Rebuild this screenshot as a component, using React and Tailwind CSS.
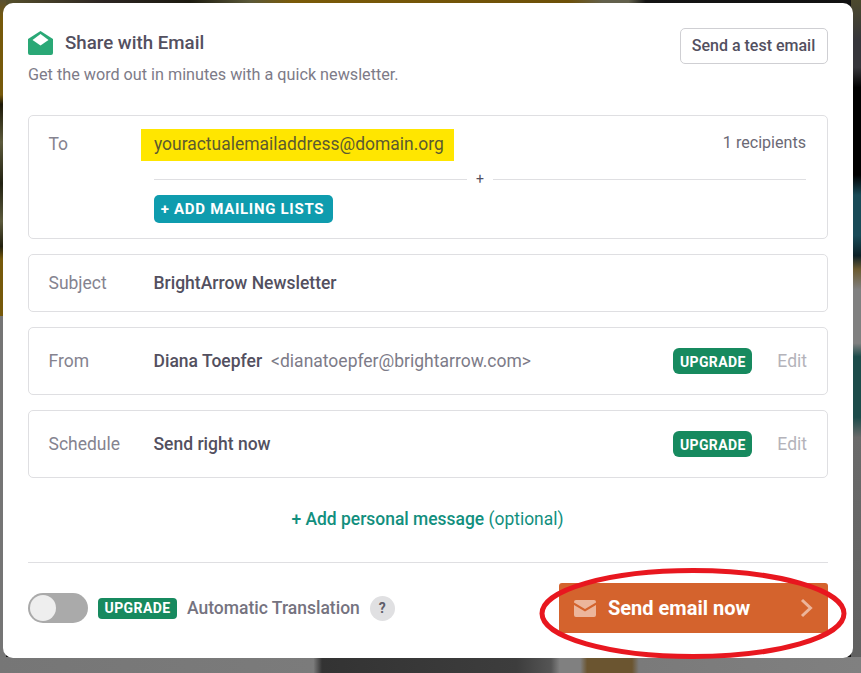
const roboto = { fontFamily: 'Roboto, sans-serif' };

function UpgradeBadge({ tall }) {
    return (
        <span
            className={`flex w-[79px] items-center justify-center bg-[#178a5f] text-[14px] leading-none font-bold tracking-[0.4px] text-white ${tall ? 'h-[26px] rounded-[6px] pt-px' : 'h-[21px] rounded-[4px]'}`}
        >
            UPGRADE
        </span>
    );
}

function Row({ label, height, children, right }) {
    return (
        <div className={`flex items-center rounded-[5px] border border-[#dfdfe2] pr-[20px] pl-[19.5px] ${height}`}>
            <span className="w-[105px] shrink-0 text-[17.5px] text-[#85838f]">{label}</span>
            <div className="flex-1 text-[17.5px] font-medium text-[#53505f]">{children}</div>
            {right}
        </div>
    );
}

function Backdrop() {
    return (
        <div className="absolute inset-0 bg-[#111]">
            <div className="absolute top-0 left-0 h-[8px] w-full bg-[linear-gradient(90deg,#57512c_0%,#2c2522_12%,#1c1a10_22%,#5a5838_29%,#7a5a08_34%,#6d5008_66%,#62604c_70%,#62604c_73%,#141414_75%,#111_100%)]" />
            <div className="absolute top-0 left-0 h-[316px] w-[6px] bg-[linear-gradient(180deg,#5a5030_0%,#76590a_6%,#76590a_30%,#1d1908_33%,#5c5a3c_45%,#222212_58%,#5c5a3c_70%,#22200f_78%,#76590a_82%,#76590a_100%)]" />
            <div className="absolute top-[316px] left-0 h-[357px] w-[6px] bg-[#757575]" />
            <div className="absolute top-0 right-0 h-[673px] w-[10px] bg-[linear-gradient(180deg,#4d4a2e_0%,#35353a_6%,#35353a_10%,#000_13%,#000_26%,#184a57_29%,#184a57_35%,#0c2026_38%,#6b5a30_40%,#808080_43%,#808080_51%,#1c4b4a_53%,#1c4b4a_62%,#6a6a6a_65%,#606060_100%)]" />
            <div className="absolute bottom-0 left-0 h-[16px] w-full bg-[linear-gradient(90deg,#767676_0%,#7b7b7b_36.4%,#333_37.4%,#3d3d3d_60%,#555_64%,#808080_65%,#808080_67.4%,#6b5530_68.2%,#6b5530_73.4%,#7a7a7a_74.2%,#808080_100%)]" />
        </div>
    );
}

export default function App() {
    return (
        <div className="relative h-[673px] w-[861px] overflow-hidden pt-[3px] pl-[3px]" style={roboto}>
            <Backdrop />

            <div className="relative h-[655px] w-[850px] rounded-[10px] bg-white px-[25px] pt-[25px]">
                <div className="flex h-[66px] items-start justify-between">
                    <div className="pt-px">
                        <div className="flex h-[28px] items-center">
                            <svg width="25" height="24" viewBox="0 0 25 24" className="mr-[12px]">
                                <path
                                    fill="#2aa876"
                                    d="M12.5 0 L25 8 V22 a2 2 0 0 1 -2 2 H2 a2 2 0 0 1 -2 -2 V8 Z"
                                />
                                <path fill="#fff" d="M12.5 3 L20.5 9 L12.5 14.5 L4.5 9 Z" />
                            </svg>
                            <span className="text-[18.7px] font-medium text-[#53505f]">Share with Email</span>
                        </div>
                        <p className="mt-[8px] text-[16.2px] leading-[20px] text-[#7d7b88]">
                            Get the word out in minutes with a quick newsletter.
                        </p>
                    </div>
                    <button className="h-[36px] w-[148px] rounded-[5px] border border-[#cfcfd3] pr-px text-[16px] font-medium text-[#53505f]">
                        Send a test email
                    </button>
                </div>

                <div className="mt-[21px] h-[124px] rounded-[5px] border border-[#dfdfe2] pt-[13px] pr-[21px] pl-[19.5px]">
                    <div className="flex h-[32px] items-center">
                        <span className="w-[92.5px] shrink-0 pb-[2px] text-[17.5px] text-[#85838f]">To</span>
                        <span className="flex h-[32px] w-[313px] items-center bg-[#ffe600] pb-[2px] pl-[13px] text-[17.45px] text-[#5c5a30]">
                            youractualemailaddress@domain.org
                        </span>
                        <span className="ml-auto pb-[4px] text-[16.1px] text-[#6b6975]">1 recipients</span>
                    </div>
                    <div className="mt-[10px] ml-[105.5px] flex h-[16px] items-center">
                        <div className="h-px flex-1 bg-[#dfdfe2]" />
                        <span className="w-[26px] text-center text-[14px] leading-none text-[#53505f]">+</span>
                        <div className="h-px w-[313px] bg-[#dfdfe2]" />
                    </div>
                    <button className="mt-[8px] ml-[105.5px] flex h-[28px] w-[179px] items-center justify-center rounded-[5px] bg-[#0f9cae] pr-[2px] text-[15px] font-bold tracking-[0.7px] text-white">
                        + ADD MAILING LISTS
                    </button>
                </div>

                <div className="mt-[15px]">
                    <Row label="Subject" height="h-[58px]">BrightArrow Newsletter</Row>
                </div>
                <div className="mt-[15px]">
                    <Row
                        label="From"
                        height="h-[68px]"
                        right={
                            <div className="flex items-center gap-[25px]">
                                <UpgradeBadge tall />
                                <span className="text-[17.5px] text-[#b4b3ba]">Edit</span>
                            </div>
                        }
                    >
                        Diana Toepfer
                        <span className="ml-[9px] font-normal text-[#7d7b88]">{'<dianatoepfer@brightarrow.com>'}</span>
                    </Row>
                </div>
                <div className="mt-[15px]">
                    <Row
                        label="Schedule"
                        height="h-[68px]"
                        right={
                            <div className="flex items-center gap-[25px]">
                                <UpgradeBadge tall />
                                <span className="text-[17.5px] text-[#b4b3ba]">Edit</span>
                            </div>
                        }
                    >
                        Send right now
                    </Row>
                </div>

                <div className="mt-[29px] pr-px text-center text-[17.45px] leading-[24px] font-medium text-[#128f7e]">
                    + Add personal message <span className="font-normal">(optional)</span>
                </div>

                <div className="mt-[31px] h-px bg-[#dfdfe2]" />

                <div className="mt-[20px] flex h-[50px] items-center">
                    <div className="flex h-[30px] w-[60px] items-center rounded-full bg-[#aaaaaa] pl-[2px]">
                        <div className="h-[26px] w-[26px] rounded-full bg-[#eeeeee]" />
                    </div>
                    <div className="ml-[10px]">
                        <UpgradeBadge />
                    </div>
                    <span className="ml-[10px] text-[17.5px] font-medium text-[#75737f]">Automatic Translation</span>
                    <span className="ml-[10px] flex h-[25px] w-[25px] items-center justify-center rounded-full bg-[#e0e0e2] text-[14px] font-bold text-[#5f5d69]">
                        ?
                    </span>
                    <button className="ml-auto flex h-[50px] w-[269px] items-center rounded-[3px] bg-[#d4632d] pr-[15px] pl-[15px] text-[20px] font-bold text-white">
                        <svg width="22" height="17" viewBox="0 0 22 17" className="mr-[12px]">
                            <path fill="#ecb59b" d="M2 0 H20 a2 2 0 0 1 2 2 V2.5 L11 9 L0 2.5 V2 a2 2 0 0 1 2 -2 Z" />
                            <path fill="#ecb59b" d="M0 5 L11 11.5 L22 5 V15 a2 2 0 0 1 -2 2 H2 a2 2 0 0 1 -2 -2 Z" />
                        </svg>
                        Send email now
                        <svg width="13" height="20" viewBox="0 0 13 20" className="ml-auto">
                            <path d="M2 2 L10.5 10 L2 18" fill="none" stroke="#ecb59b" strokeWidth="3" />
                        </svg>
                    </button>
                </div>
            </div>

            {/* hand-drawn annotation over the send button */}
            <svg width="320" height="100" viewBox="0 0 320 100" className="absolute top-[564px] left-[534px]">
                <ellipse cx="159" cy="49.5" rx="151" ry="43" fill="none" stroke="#e8171f" strokeWidth="5" />
            </svg>
        </div>
    );
}
